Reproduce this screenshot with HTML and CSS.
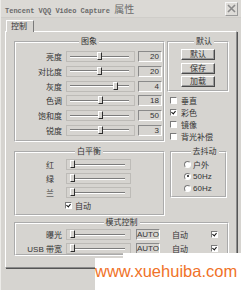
FILE: index.html
```html
<!DOCTYPE html>
<html lang="zh">
<head>
    <meta charset="UTF-8">
    <title>Tencent VQQ Video Capture 属性</title>
    <link rel="stylesheet" href="styles.css">
</head>
<body>
    <div class="window">
        <div class="titlebar">
            <span class="title">Tencent VQQ Video Capture <span class="title-cjk">属性</span></span>
            <span class="close">
                <svg width="9" height="9" viewBox="0 0 9 9"><path d="M1 1L8 8M8 1L1 8" stroke="#8a8a8a" stroke-width="1.6"/></svg>
            </span>
        </div>
        <div class="tabs">
            <div class="tab">控制</div>
        </div>
        <div class="panel">
            <div class="row top">
                <fieldset class="group image">
                    <legend>图象</legend>
                    <div class="ctrl"><span class="lbl">亮度</span><div class="slider"><span class="track"></span><i class="thumb" style="left:30px"></i></div><span class="val">20</span></div>
                    <div class="ctrl"><span class="lbl">对比度</span><div class="slider"><span class="track"></span><i class="thumb" style="left:30px"></i></div><span class="val">20</span></div>
                    <div class="ctrl"><span class="lbl">灰度</span><div class="slider"><span class="track"></span><i class="thumb" style="left:46px"></i></div><span class="val">4</span></div>
                    <div class="ctrl"><span class="lbl">色调</span><div class="slider"><span class="track"></span><i class="thumb" style="left:31px"></i></div><span class="val">18</span></div>
                    <div class="ctrl"><span class="lbl">饱和度</span><div class="slider"><span class="track"></span><i class="thumb" style="left:31px"></i></div><span class="val">50</span></div>
                    <div class="ctrl"><span class="lbl">锐度</span><div class="slider"><span class="track"></span><i class="thumb" style="left:31px"></i></div><span class="val">3</span></div>
                </fieldset>
                <div class="side">
                    <fieldset class="group defaults">
                        <legend>默认</legend>
                        <button>默认</button>
                        <button>保存</button>
                        <button>加载</button>
                    </fieldset>
                    <div class="checks">
                        <label class="check"><span class="box"></span>垂直</label>
                        <label class="check"><span class="box on"></span>彩色</label>
                        <label class="check"><span class="box"></span>镜像</label>
                        <label class="check"><span class="box"></span>背光补偿</label>
                    </div>
                </div>
            </div>

            <div class="row middle">
                <fieldset class="group balance">
                    <legend>白平衡</legend>
                    <div class="ctrl"><span class="lbl short">红</span><div class="slider wide"><span class="track"></span><i class="thumb" style="left:3px"></i></div></div>
                    <div class="ctrl"><span class="lbl short">绿</span><div class="slider wide"><span class="track"></span><i class="thumb" style="left:3px"></i></div></div>
                    <div class="ctrl"><span class="lbl short">兰</span><div class="slider wide"><span class="track"></span><i class="thumb" style="left:3px"></i></div></div>
                    <label class="check auto"><span class="box on"></span>自动</label>
                </fieldset>
                <fieldset class="group flicker">
                    <legend>去抖动</legend>
                    <label class="radio"><span class="dot"></span>户外</label>
                    <label class="radio"><span class="dot on"></span>50Hz</label>
                    <label class="radio"><span class="dot"></span>60Hz</label>
                </fieldset>
            </div>

            <fieldset class="group mode">
                <legend>模式控制</legend>
                <div class="ctrl"><span class="lbl">曝光</span><div class="slider wide"><span class="track"></span><i class="thumb" style="left:3px"></i></div><span class="val auto-val">AUTO</span><span class="mode-txt">自动</span><span class="box on"></span></div>
                <div class="ctrl"><span class="lbl">USB 带宽</span><div class="slider wide"><span class="track"></span><i class="thumb" style="left:3px"></i></div><span class="val auto-val">AUTO</span><span class="mode-txt">自动</span><span class="box on"></span></div>
            </fieldset>
        </div>
    </div>

    <div class="watermark">www.xuehuiba.com</div>
</body>
</html>
```

FILE: styles.css
```css
body {
    margin: 0;
    width: 241px;
    height: 290px;
    overflow: hidden;
    position: relative;
    background-color: #d6d4d0;
    font-family: "Liberation Sans", "Noto Sans CJK SC", sans-serif;
    font-size: 8px;
    color: #333;
}
.window {
    height: 290px;
    border-left: 1px solid #ecebe8;
    box-sizing: border-box;
}
.titlebar {
    height: 17px;
    display: flex;
    align-items: center;
    justify-content: space-between;
    padding: 0 3px 0 4px;
    background-color: #dbd9d5;
    border-bottom: 1px solid #cfcdc9;
}
.title {
    font-family: "Liberation Mono", "Noto Sans CJK SC", monospace;
    font-size: 7px;
    font-weight: bold;
    color: #6a6a6a;
    white-space: nowrap;
}
.title-cjk {
    font-family: "Noto Sans CJK SC", sans-serif;
    font-size: 10px;
    font-weight: normal;
}
.close {
    width: 11px;
    height: 12px;
    display: flex;
    align-items: center;
    justify-content: center;
    border: 1px solid;
    border-color: #f6f6f6 #9a9a9a #9a9a9a #f6f6f6;
    background-color: #dedcd8;
}
.tabs {
    display: flex;
    padding: 2px 0 0 5px;
}
.tab {
    position: relative;
    z-index: 1;
    width: 28px;
    height: 12px;
    line-height: 11px;
    padding-left: 4px;
    box-sizing: border-box;
    border-top: 1px solid #fff;
    border-left: 1px solid #fff;
    border-right: 1px solid #7a7a7a;
    background-color: #d6d4d0;
}
.panel {
    margin: -1px 4px 0 4px;
    height: 237px;
    box-sizing: border-box;
    border-top: 1px solid #fff;
    border-left: 1px solid #fff;
    border-right: 1px solid #8c8c8c;
    border-bottom: 1px solid #8c8c8c;
    box-shadow: 1px 1px 0 #555;
    padding: 5px 7px 0 8px;
}
.row {
    display: flex;
    align-items: flex-start;
}
.top {
    gap: 2px;
}
.middle {
    gap: 5px;
    margin-top: 5px;
}
.group {
    margin: 0;
    min-width: 0;
    border: 2px groove #fff;
    box-sizing: border-box;
}
.group legend {
    margin: 0 auto;
    padding: 0 2px;
    line-height: 10px;
}
.image {
    width: 151px;
    padding: 4px 1px 4px 0;
    display: flex;
    flex-direction: column;
    gap: 3.8px;
}
.ctrl {
    display: flex;
    align-items: center;
    height: 11px;
}
.lbl {
    width: 46px;
    margin-right: 4px;
    text-align: right;
    white-space: nowrap;
}
.lbl.short {
    width: 38px;
    margin-right: 12px;
}
.slider {
    position: relative;
    width: 69px;
    height: 11px;
    box-sizing: border-box;
    border: 1px solid #bdbbb7;
    display: flex;
    align-items: center;
    padding: 0 5px 0 3px;
    margin-right: 3px;
}
.slider.wide {
    width: 65px;
}
.track {
    flex: 1;
    height: 0;
    border-top: 1px solid #7c7c7c;
    border-bottom: 1px solid #fff;
}
.thumb {
    position: absolute;
    top: 0;
    width: 3px;
    height: 6px;
    border: 1px solid;
    border-color: #fff #2e2e2e #2e2e2e #fff;
    background-color: #d6d4d0;
}
.val {
    width: 24px;
    height: 11px;
    box-sizing: border-box;
    border: 1px solid;
    border-color: #8a8a8a #fff #fff #8a8a8a;
    text-align: right;
    padding-right: 2px;
    line-height: 9px;
}
.side {
    width: 62px;
}
.defaults {
    padding: 2px 0 3px 12px;
    display: flex;
    flex-direction: column;
    gap: 2.5px;
}
button {
    width: 34px;
    height: 11px;
    padding: 0;
    font: inherit;
    line-height: 9px;
    color: #333;
    background-color: #d6d4d0;
    border: 1px solid;
    border-color: #fff #4a4a4a #4a4a4a #fff;
    box-shadow: inset -1px -1px 0 #9a9a9a;
}
.checks {
    margin-top: 2px;
}
.check {
    display: flex;
    align-items: center;
    gap: 4px;
    height: 12px;
    padding-left: 3px;
}
.box {
    position: relative;
    width: 7px;
    height: 7px;
    box-sizing: border-box;
    border: 1px solid;
    border-color: #7a7a7a #fff #fff #7a7a7a;
    background-color: #fff;
    flex: none;
}
.box.on::after {
    content: "";
    position: absolute;
    left: 1px;
    top: 0;
    width: 2px;
    height: 3px;
    border-right: 1.5px solid #111;
    border-bottom: 1.5px solid #111;
    transform: rotate(40deg);
}
.balance {
    width: 151px;
    padding: 2px 1px 3px 0;
    display: flex;
    flex-direction: column;
    gap: 3px;
}
.check.auto {
    height: 11px;
    margin-top: -1px;
    padding-left: 49px;
    gap: 3px;
}
.flicker {
    width: 57px;
    padding: 1px 0 2px 12px;
}
.radio {
    display: flex;
    align-items: center;
    gap: 2px;
    height: 12px;
}
.dot {
    position: relative;
    width: 7px;
    height: 7px;
    box-sizing: border-box;
    border-radius: 50%;
    border: 1px solid;
    border-color: #7a7a7a #fff #fff #7a7a7a;
    background-color: #fff;
}
.dot.on::after {
    content: "";
    position: absolute;
    left: 1.5px;
    top: 1.5px;
    width: 2px;
    height: 2px;
    border-radius: 50%;
    background-color: #111;
}
.mode {
    margin-top: 2px;
    padding: 1px 0 0 0;
    display: flex;
    flex-direction: column;
    gap: 3px;
}
.slider.wide + .auto-val {
    margin-left: 2px;
}
.mode-txt {
    margin-left: 12px;
}
.mode .box {
    margin-left: auto;
    margin-right: 9px;
}
.watermark {
    position: absolute;
    left: 95px;
    top: 258px;
    right: 0;
    bottom: 0;
    padding-top: 4px;
    background-color: #fff;
    color: #f07228;
    font-family: "Liberation Sans", sans-serif;
    font-size: 16.5px;
    white-space: nowrap;
}
.watermark::before {
    content: "";
    position: absolute;
    left: 28px;
    right: 0;
    top: -5px;
    height: 5px;
    background-color: #fff;
}
```
